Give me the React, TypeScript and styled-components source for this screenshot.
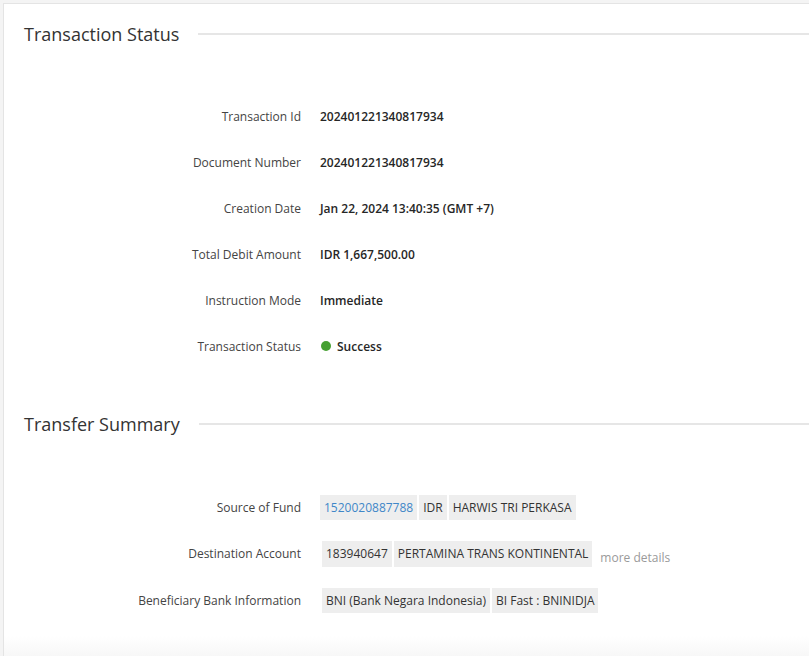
import styled, { createGlobalStyle } from 'styled-components';

const GlobalStyle = createGlobalStyle`
  body {
    margin: 0;
    background: #f4f4f4;
    font-family: 'Open Sans', 'Liberation Sans', sans-serif;
    overflow: hidden;
  }
`;

const statusRows = [
  { label: 'Transaction Id', value: '202401221340817934' },
  { label: 'Document Number', value: '202401221340817934' },
  { label: 'Creation Date', value: 'Jan 22, 2024 13:40:35 (GMT +7)' },
  { label: 'Total Debit Amount', value: 'IDR 1,667,500.00' },
  { label: 'Instruction Mode', value: 'Immediate' },
];

const App = () => {
  return (
    <>
      <GlobalStyle />
      <Card>
        <Section>
          <Header>
            <Title>Transaction Status</Title>
            <Rule />
          </Header>
          <Rows $top={47}>
            {statusRows.map((row) => (
              <Row key={row.label}>
                <Label>{row.label}</Label>
                <Value>{row.value}</Value>
              </Row>
            ))}
            <Row>
              <Label>Transaction Status</Label>
              <Value>
                <Dot />
                Success
              </Value>
            </Row>
          </Rows>
        </Section>

        <Section $top={43}>
          <Header>
            <Title>Transfer Summary</Title>
            <Rule />
          </Header>
          <Rows $top={48}>
            <Row $h={46}>
              <Label>Source of Fund</Label>
              <Chips>
                <Chip $link>1520020887788</Chip>
                <Chip>IDR</Chip>
                <Chip>HARWIS TRI PERKASA</Chip>
              </Chips>
            </Row>
            <Row $h={47}>
              <Label>Destination Account</Label>
              <Chips $shift>
                <Chip $tall>183940647</Chip>
                <Chip $tall>PERTAMINA TRANS KONTINENTAL</Chip>
                <More>more details</More>
              </Chips>
            </Row>
            <Row $h={46}>
              <Label>Beneficiary Bank Information</Label>
              <Chips $shift>
                <Chip>BNI (Bank Negara Indonesia)</Chip>
                <Chip>BI Fast : BNINIDJA</Chip>
              </Chips>
            </Row>
          </Rows>
        </Section>
      </Card>
    </>
  );
};

const Card = styled.div`
  box-sizing: border-box;
  width: 830px;
  height: 660px;
  margin: 3px 0 0 3px;
  padding: 18px 0 0 20px;
  border: 1px solid #e4e4e4;
  background: linear-gradient(to bottom, #fff calc(100% - 26px), #f5f5f5);
`;

const Section = styled.section<{ $top?: number }>`
  margin-top: ${({ $top }) => $top ?? 0}px;
`;

const Header = styled.div`
  display: flex;
  align-items: center;
  height: 24px;
  gap: 19px;
`;

const Title = styled.h2`
  margin: 0;
  font-size: 18px;
  font-weight: 400;
  color: #333;
  white-space: nowrap;
`;

const Rule = styled.div`
  flex: 1;
  height: 2px;
  background: #e6e6e6;
`;

const Rows = styled.div<{ $top: number }>`
  margin-top: ${({ $top }) => $top}px;
`;

const Row = styled.div<{ $h?: number }>`
  display: flex;
  align-items: center;
  height: ${({ $h }) => $h ?? 46}px;
  gap: 19px;
  font-size: 12px;
`;

const Label = styled.div`
  width: 277px;
  text-align: right;
  color: #444;
`;

const Value = styled.div`
  display: flex;
  align-items: center;
  font-weight: 600;
  color: #262626;
`;

const Dot = styled.span`
  width: 10px;
  height: 10px;
  border-radius: 50%;
  background: #46a032;
  margin: 0 6px 0 1px;
`;

const Chips = styled.div<{ $shift?: boolean }>`
  display: flex;
  align-items: center;
  gap: 2px;
  margin-left: ${({ $shift }) => ($shift ? 2 : 0)}px;
`;

const Chip = styled.span<{ $link?: boolean; $tall?: boolean }>`
  display: inline-flex;
  align-items: center;
  height: ${({ $tall }) => ($tall ? 26 : 25)}px;
  padding: 0 4px;
  background: #eeeeee;
  color: ${({ $link }) => ($link ? '#3f87c8' : '#333')};
  white-space: nowrap;
`;

const More = styled.span`
  margin: 7px 0 0 6px;
  color: #9a9a9a;
`;

export default App;
